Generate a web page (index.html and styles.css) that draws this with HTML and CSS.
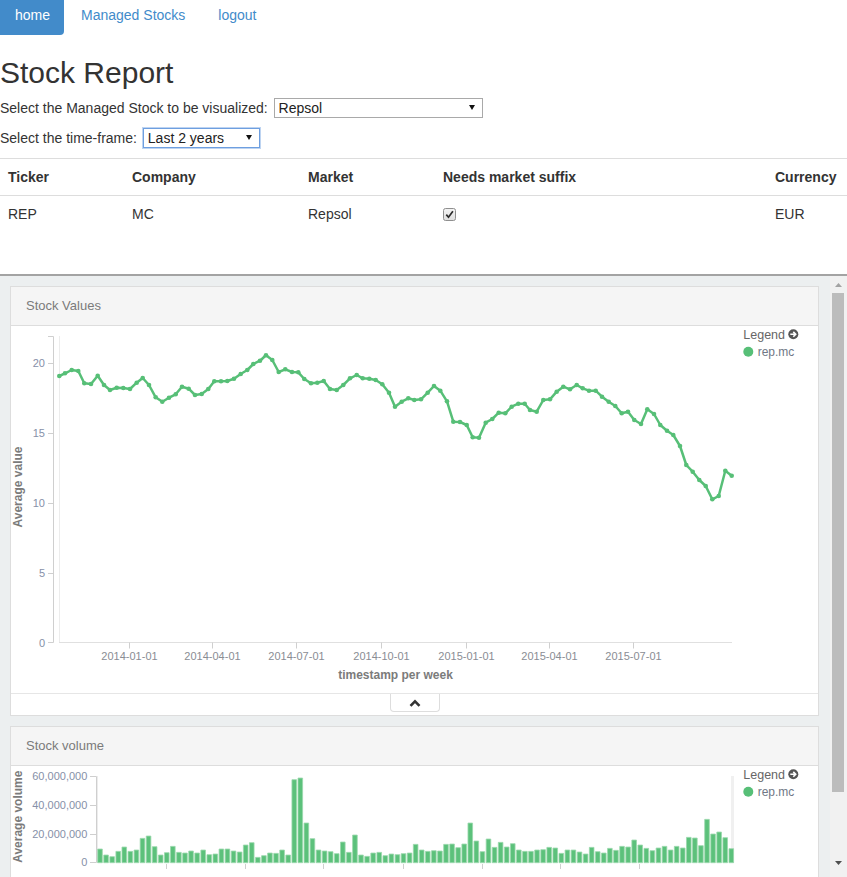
FILE: index.html
```html
<!DOCTYPE html>
<html>
<head>
<meta charset="utf-8">
<title>Stock Report</title>
<link rel="stylesheet" href="styles.css">
</head>
<body>
<ul class="nav">
  <li class="active"><a href="#">home</a></li>
  <li><a href="#">Managed Stocks</a></li>
  <li><a href="#">logout</a></li>
</ul>
<h2 class="title">Stock Report</h2>
<p class="field">Select the Managed Stock to be visualized: <span class="select wide"><select><option>Repsol</option></select></span></p>
<p class="field">Select the time-frame: <span class="select narrow focus"><select><option>Last 2 years</option></select></span></p>
<table class="info">
  <colgroup><col class="c1"><col class="c2"><col class="c3"><col class="c4"><col class="c5"></colgroup>
  <thead><tr><th>Ticker</th><th>Company</th><th>Market</th><th>Needs market suffix</th><th>Currency</th></tr></thead>
  <tbody><tr><td>REP</td><td>MC</td><td>Repsol</td><td><span class="check" role="checkbox" aria-checked="true" aria-disabled="true"><svg width="13" height="13" viewBox="0 0 13 13"><defs><linearGradient id="cbg" x1="0" y1="0" x2="0" y2="1"><stop offset="0" stop-color="#f4f4f4"/><stop offset="1" stop-color="#dedede"/></linearGradient></defs><rect x="0.5" y="0.5" width="12" height="12" rx="2" fill="url(#cbg)" stroke="#8f8f8f"/><path d="M3.3 6.6l2.2 2.6 4.4-6" fill="none" stroke="#2b2b2b" stroke-width="1.7"/></svg></span></td><td>EUR</td></tr></tbody>
</table>
<div class="dash">
  <div class="dash-content">
    <section class="panel">
      <div class="panel-head">Stock Values</div>
      <div class="panel-body">
        <svg class="chart" width="808" height="367" viewBox="11 326 808 367">
          <defs>
            <marker id="dot" viewBox="0 0 6 6" refX="3" refY="3" markerWidth="6" markerHeight="6" markerUnits="userSpaceOnUse"><circle cx="3" cy="3" r="2.3" fill="#57bf77"/></marker>
          </defs>
          <path class="ax" d="M48 336.5H53.5V642.5H48M48 363.5H53.5M48 433.5H53.5M48 503.5H53.5M48 573.5H53.5"/>
          <path class="ax-light" d="M59.5 336V642"/>
          <path class="ax-x" d="M59 642.5H732"/>
          <path class="ax" d="M129.5 642.5v6M212.5 642.5v6M296.5 642.5v6M381.5 642.5v6M466.5 642.5v6M549.5 642.5v6M633.5 642.5v6"/>
          <g class="ylab">
            <text x="45" y="367">20</text>
            <text x="45" y="437">15</text>
            <text x="45" y="507">10</text>
            <text x="45" y="577">5</text>
            <text x="45" y="646.5">0</text>
          </g>
          <g class="xlab">
            <text x="129.5" y="660">2014-01-01</text>
            <text x="212.5" y="660">2014-04-01</text>
            <text x="296.5" y="660">2014-07-01</text>
            <text x="381.5" y="660">2014-10-01</text>
            <text x="466.5" y="660">2015-01-01</text>
            <text x="549.5" y="660">2015-04-01</text>
            <text x="633.5" y="660">2015-07-01</text>
          </g>
          <text class="axtitle" x="395.5" y="678.5">timestamp per week</text>
          <text class="axtitle" transform="translate(21.5 487) rotate(-90)">Average value</text>
          <polyline class="line" points="59.3,376 65,373.3 71.7,370 78.3,371 84.3,383.3 91,384 97.7,375.7 104,385 110,390 116.7,387.7 123.3,388 130,389 136.7,382.7 142.7,378 149,385 155.7,397.3 162.3,401.7 169,397.7 175.7,394.3 182,386.7 188.7,388.7 195,395 201.7,394 208.3,389 214.3,381.3 221,381.3 227.3,381 234,378.7 240.7,374 247.3,370 253.3,364 260,360.7 266,355.3 272.3,360 278.7,372 285.3,369.3 292,372 298.3,372.3 304.3,379 311,383.3 317.3,382.7 323.7,381 330,389 336.7,390 343.3,385 350,378.3 356.7,375 362.7,378.3 369.3,378.7 375.7,380 382.3,384.3 389,392.7 395,406.7 401.7,401.7 408.3,398.3 414.3,400 421,399.3 427.7,392.7 434,386 440.3,390.7 447,401.3 453.3,421.7 460,422 466.7,425 472.7,437.3 479,437.7 485.7,422.7 492.3,419 498.7,412.7 505.3,413.3 511.7,406.7 518.3,403.7 524.7,403.7 530,410 536.7,411.7 543.3,400 550,399.3 556.7,391.7 563.3,386.7 570,389.3 576.7,385 582.7,388.3 589,390.7 595.7,390.7 602,396.7 608.7,401.7 615.3,406 621.7,413.3 628,411.7 634.3,420 641,424 647.3,409.3 654,414 660.3,425 667,430.7 673.3,435 680,446 686.3,465 692.7,471.7 699.3,480 705.7,486 712.3,499.3 718.7,496 725.3,470.7 731.7,475.7"/>
          <g class="legend">
            <text class="lg-title" x="743.3" y="338.8">Legend</text>
            <circle cx="793.3" cy="334.3" r="5" fill="#555"/>
            <path class="lg-arrow" d="M790.3 334.3h5M793.3 331.9l2.4 2.4-2.4 2.4"/>
            <circle cx="748.3" cy="351.7" r="5" fill="#57bf77"/>
            <text class="lg-item" x="757.7" y="355.8">rep.mc</text>
          </g>
        </svg>
      </div>
      <div class="panel-foot">
        <div class="toggle">
          <svg width="12" height="8" viewBox="0 0 12 8"><polyline points="1.5,6.8 6,2.3 10.5,6.8" fill="none" stroke="#333" stroke-width="2.6"/></svg>
        </div>
      </div>
    </section>
    <section class="panel">
      <div class="panel-head">Stock volume</div>
      <div class="panel-body">
        <svg class="chart" width="808" height="200" viewBox="11 766 808 200">
          <path class="ax" d="M90 776.5H96.5V862.5H90M90 805.5H96.5M90 834.5H96.5"/>
          <path class="ax-light" d="M97.5 776V863"/>
          <rect x="731" y="776" width="3" height="87" fill="#f0f0f0"/>
          <path class="ax" d="M166.5 864v5M245.5 864v5M323.5 864v5M403.5 864v5M482.5 864v5M560.5 864v5M639.5 864v5"/>
          <g class="ylab">
            <text x="87.3" y="780.4">60,000,000</text>
            <text x="87.3" y="809">40,000,000</text>
            <text x="87.3" y="837.7">20,000,000</text>
            <text x="87.3" y="866.4">0</text>
          </g>
          <text class="axtitle" transform="translate(21.5 816.7) rotate(-90)">Average volume</text>
          <g class="bars" transform="translate(97.7 862.7) scale(6.07 -0.33333)">
            <rect x="0" width=".76" height="41"/><rect x="1" width=".76" height="23"/><rect x="2" width=".76" height="18"/><rect x="3" width=".76" height="34"/><rect x="4" width=".76" height="47"/><rect x="5" width=".76" height="34"/><rect x="6" width=".76" height="38"/><rect x="7" width=".76" height="73"/><rect x="8" width=".76" height="80"/><rect x="9" width=".76" height="48"/>
            <rect x="10" width=".76" height="23"/><rect x="11" width=".76" height="30"/><rect x="12" width=".76" height="49"/><rect x="13" width=".76" height="31"/><rect x="14" width=".76" height="29"/><rect x="15" width=".76" height="35"/><rect x="16" width=".76" height="29"/><rect x="17" width=".76" height="38"/><rect x="18" width=".76" height="24"/><rect x="19" width=".76" height="26"/>
            <rect x="20" width=".76" height="41"/><rect x="21" width=".76" height="41"/><rect x="22" width=".76" height="35"/><rect x="23" width=".76" height="32"/><rect x="24" width=".76" height="53"/><rect x="25" width=".76" height="60"/><rect x="26" width=".76" height="16"/><rect x="27" width=".76" height="21"/><rect x="28" width=".76" height="29"/><rect x="29" width=".76" height="28"/>
            <rect x="30" width=".76" height="38"/><rect x="31" width=".76" height="23"/><rect x="32" width=".76" height="249"/><rect x="33" width=".76" height="254"/><rect x="34" width=".76" height="119"/><rect x="35" width=".76" height="72"/><rect x="36" width=".76" height="38"/><rect x="37" width=".76" height="35"/><rect x="38" width=".76" height="33"/><rect x="39" width=".76" height="27"/>
            <rect x="40" width=".76" height="62"/><rect x="41" width=".76" height="31"/><rect x="42" width=".76" height="83"/><rect x="43" width=".76" height="23"/><rect x="44" width=".76" height="19"/><rect x="45" width=".76" height="29"/><rect x="46" width=".76" height="31"/><rect x="47" width=".76" height="21"/><rect x="48" width=".76" height="26"/><rect x="49" width=".76" height="24"/>
            <rect x="50" width=".76" height="27"/><rect x="51" width=".76" height="29"/><rect x="52" width=".76" height="55"/><rect x="53" width=".76" height="38"/><rect x="54" width=".76" height="34"/><rect x="55" width=".76" height="36"/><rect x="56" width=".76" height="35"/><rect x="57" width=".76" height="55"/><rect x="58" width=".76" height="56"/><rect x="59" width=".76" height="45"/>
            <rect x="60" width=".76" height="56"/><rect x="61" width=".76" height="119"/><rect x="62" width=".76" height="65"/><rect x="63" width=".76" height="33"/><rect x="64" width=".76" height="71"/><rect x="65" width=".76" height="46"/><rect x="66" width=".76" height="61"/><rect x="67" width=".76" height="47"/><rect x="68" width=".76" height="57"/><rect x="69" width=".76" height="38"/>
            <rect x="70" width=".76" height="34"/><rect x="71" width=".76" height="34"/><rect x="72" width=".76" height="38"/><rect x="73" width=".76" height="39"/><rect x="74" width=".76" height="46"/><rect x="75" width=".76" height="44"/><rect x="76" width=".76" height="28"/><rect x="77" width=".76" height="38"/><rect x="78" width=".76" height="38"/><rect x="79" width=".76" height="32"/>
            <rect x="80" width=".76" height="26"/><rect x="81" width=".76" height="46"/><rect x="82" width=".76" height="33"/><rect x="83" width=".76" height="29"/><rect x="84" width=".76" height="43"/><rect x="85" width=".76" height="37"/><rect x="86" width=".76" height="49"/><rect x="87" width=".76" height="47"/><rect x="88" width=".76" height="68"/><rect x="89" width=".76" height="53"/>
            <rect x="90" width=".76" height="43"/><rect x="91" width=".76" height="36"/><rect x="92" width=".76" height="44"/><rect x="93" width=".76" height="49"/><rect x="94" width=".76" height="38"/><rect x="95" width=".76" height="49"/><rect x="96" width=".76" height="44"/><rect x="97" width=".76" height="76"/><rect x="98" width=".76" height="74"/><rect x="99" width=".76" height="51"/>
            <rect x="100" width=".76" height="130"/><rect x="101" width=".76" height="86"/><rect x="102" width=".76" height="92"/><rect x="103" width=".76" height="75"/><rect x="104" width=".76" height="42"/>
          </g>
          <g class="legend">
            <text class="lg-title" x="743.3" y="778.8">Legend</text>
            <circle cx="793.3" cy="774.3" r="5" fill="#555"/>
            <path class="lg-arrow" d="M790.3 774.3h5M793.3 771.9l2.4 2.4-2.4 2.4"/>
            <circle cx="748.3" cy="791.7" r="5" fill="#57bf77"/>
            <text class="lg-item" x="757.7" y="795.8">rep.mc</text>
          </g>
        </svg>
      </div>
    </section>
  </div>
  <div class="scrollbar">
    <div class="sb-btn"><svg width="7" height="4" viewBox="0 0 7 4"><polygon points="0,4 3.5,0 7,4" fill="#a3a3a3"/></svg></div>
    <div class="sb-thumb"></div>
    <div class="sb-space"></div>
    <div class="sb-btn"><svg width="7" height="4" viewBox="0 0 7 4"><polygon points="0,0 7,0 3.5,4" fill="#505050"/></svg></div>
  </div>
</div>
</body>
</html>
```
FILE: styles.css
```css
* { box-sizing: border-box; }
html, body { margin: 0; padding: 0; }
body {
  font-family: "Liberation Sans", Arial, sans-serif;
  font-size: 14px;
  line-height: 20px;
  color: #333;
  background: #fff;
  width: 847px;
  height: 877px;
  overflow: hidden;
}

/* nav pills */
.nav { list-style: none; margin: 0; padding: 0; display: flex; height: 35px; }
.nav li + li { margin-left: 2px; }
.nav a { display: block; padding: 5px 16px 10px 15px; color: #428bca; text-decoration: none; }
.nav .active a { background: #428bca; color: #fff; border-radius: 0 0 4px 0; padding-right: 14px; }

.title { font-size: 30px; font-weight: normal; line-height: 33px; margin: 21px 0 9px; color: #333; }

.field { margin: 0 0 10px; height: 20px; white-space: nowrap; }
.select { position: relative; display: inline-block; vertical-align: top; margin-left: 2px; }
.select select {
  -webkit-appearance: none;
  appearance: none;
  display: block;
  margin: 0;
  height: 20px;
  padding: 0 0 0 4px;
  border: 1px solid #a9a9a9;
  border-radius: 0;
  background: #fff;
  color: #222;
  font-family: "Liberation Sans", Arial, sans-serif;
  font-size: 14px;
  line-height: 18px;
  outline: none;
}
.select.wide select { width: 209px; }
.select.narrow select { width: 117px; }
.select.focus select { border-color: #6e9fe0; box-shadow: 0 0 0 1px rgba(110, 159, 224, 0.45); }
.select::after {
  content: "";
  position: absolute;
  right: 8px;
  top: 7px;
  border-left: 3px solid transparent;
  border-right: 3px solid transparent;
  border-top: 5px solid #111;
}

/* table */
.info { width: 847px; border-collapse: collapse; margin-bottom: 42px; table-layout: fixed; }
.info .c1 { width: 124px; }
.info .c2 { width: 176px; }
.info .c3 { width: 135px; }
.info .c4 { width: 332px; }
.info .c5 { width: 80px; }
.info th, .info td { padding: 8px; text-align: left; line-height: 20px; vertical-align: top; }
.info th { font-weight: bold; border-top: 1px solid #ddd; border-bottom: 1px solid #ddd; }
.info td { border-top: 1px solid #ddd; }
.check { display: inline-block; margin-top: 4px; vertical-align: top; width: 13px; height: 13px; }
.check svg { display: block; }

/* dashboard area */
.dash {
  height: 603px;
  border-top: 2px solid #a3a3a3;
  background: #eceff0;
  display: flex;
}
.dash-content {
  flex: 1;
  min-width: 0;
  padding: 10px 11px 0 10px;
  overflow: hidden;
  display: flex;
  flex-direction: column;
  gap: 10px;
}
.panel { flex: none; background: #fff; border: 1px solid #ddd; }
.panel-head {
  height: 39px;
  border-bottom: 1px solid #ddd;
  background: #f5f5f5;
  padding: 0 15px;
  display: flex;
  align-items: center;
  font-size: 13px;
  color: #7b7b7b;
}
.panel-body svg { display: block; }
.panel-foot {
  height: 22px;
  border-top: 1px solid #e6e6e6;
  display: flex;
  justify-content: center;
}
.toggle {
  width: 50px;
  height: 18px;
  border: 1px solid #ddd;
  border-top: none;
  border-radius: 0 0 4px 4px;
  background: #fff;
  display: flex;
  align-items: center;
  justify-content: center;
}
.toggle svg { display: block; }

/* charts */
.chart text { font-family: "Liberation Sans", Arial, sans-serif; }
.ax { fill: none; stroke: #cfcfcf; stroke-width: 1; }
.ax-light { fill: none; stroke: #ececec; stroke-width: 1; }
.ax-x { fill: none; stroke: #e0e0e0; stroke-width: 1; }
.ylab text { font-size: 11px; fill: #8690a8; text-anchor: end; }
.xlab text { font-size: 11px; fill: #8a8d94; text-anchor: middle; }
.axtitle { font-size: 12px; font-weight: bold; fill: #7b7b7b; text-anchor: middle; }
.line {
  fill: none;
  stroke: #57bf77;
  stroke-width: 2.5;
  stroke-linejoin: round;
  marker-start: url(#dot);
  marker-mid: url(#dot);
  marker-end: url(#dot);
}
.bars rect { fill: #5cc17b; stroke: #9ad8ac; stroke-width: 0.8; vector-effect: non-scaling-stroke; }
.lg-title { font-size: 12.5px; fill: #666; }
.lg-item { font-size: 12px; fill: #707886; }
.lg-arrow { fill: none; stroke: #fff; stroke-width: 1.6; }

/* scrollbar */
.scrollbar {
  width: 17px;
  flex: none;
  display: flex;
  flex-direction: column;
  background: #f1f1f1;
  padding-bottom: 6px;
}
.sb-btn { height: 17px; flex: none; display: flex; align-items: center; justify-content: center; }
.sb-btn svg { display: block; }
.sb-thumb { height: 499px; flex: none; margin: 0 3px 0 2px; background: #bcbcbc; }
.sb-space { flex: 1; }
```
